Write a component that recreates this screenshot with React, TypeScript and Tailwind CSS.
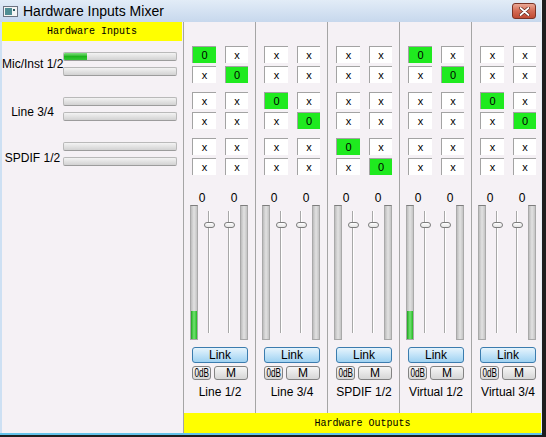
import React from 'react';

const STRIPS = [
  { name: 'Line 1/2', group: 0, level: 28 },
  { name: 'Line 3/4', group: 1, level: 0 },
  { name: 'SPDIF 1/2', group: 2, level: 0 },
  { name: 'Virtual 1/2', group: 0, level: 28 },
  { name: 'Virtual 3/4', group: 1, level: 0 },
];

const INPUTS = [
  { name: 'Mic/Inst 1/2', level: 23, nudge: '' },
  { name: 'Line 3/4', level: 0, nudge: 'mt-[6px]' },
  { name: 'SPDIF 1/2', level: 0, nudge: 'mt-[8px]' },
];

const sans = "font-['Liberation_Sans',Arial,sans-serif]";
const mono = "font-['Liberation_Mono','Courier_New',monospace]";

const Cell = ({ on, w }: { on: boolean; w: string }) => (
  <div
    className={`${w} h-[17px] flex items-center justify-center border-t border-l border-[#a3a3a3] text-[11px] leading-none text-black ${
      on ? 'bg-[#1fea1f]' : 'bg-white'
    }`}
  >
    {on ? '0' : 'x'}
  </div>
);

const HBar = ({ level }: { level: number }) => (
  <div className="h-[9px] w-full rounded-[2px] border border-[#b9b9b9] border-b-[#9c9c9c] bg-linear-to-b from-[#f3f3f3] to-[#d2d2d2] flex overflow-hidden">
    {level > 0 && (
      <div className="h-full bg-linear-to-b from-[#7be07b] via-[#1cb51c] to-[#34c734]" style={{ width: level }} />
    )}
  </div>
);

const VMeter = ({ level }: { level: number }) => (
  <div className="w-[8px] h-full flex flex-col justify-end border border-[#a9a9a9] border-t-[#7d7d7d] bg-linear-to-r from-[#bdbdbd] via-[#e2e2e2] to-[#c4c4c4]">
    {level > 0 && (
      <div className="w-full bg-linear-to-r from-[#1aa51a] via-[#6fe56f] to-[#1fb71f]" style={{ height: level }} />
    )}
  </div>
);

const Fader = ({ ml }: { ml: string }) => (
  <div className={`${ml} w-[12px] h-full relative flex justify-center`}>
    <div className="mt-[6px] mb-[7px] w-[2px] border-l border-[#a8a8a8] bg-white" />
    <div className="absolute left-[1px] top-[17px] w-[11px] h-[6px] rounded-full border border-[#7c7c7c] bg-linear-to-b from-white to-[#e4e4e4]" />
  </div>
);

const smallBtn =
  'h-[14px] rounded-[3px] border border-[#838383] bg-linear-to-b from-[#f6f6f6] to-[#d6d6d6] text-[12px] leading-none text-black flex items-center justify-center';

const Strip = ({ s, last }: { s: (typeof STRIPS)[number]; last: boolean }) => (
  <div className={`${last ? 'flex-1 min-w-0' : 'w-[72px]'} shrink-0 h-full border-l border-[#a5a5a5] flex flex-col pt-[24px]`}>
    <div className="flex flex-col gap-[9px]">
      {[0, 1, 2].map(g => (
        <div key={g} className="flex flex-col gap-[3px]">
          {[0, 1].map(r => (
            <div key={r} className="flex gap-[9px] pl-[8px]">
              <Cell on={g === s.group && r === 0} w="w-[24px]" />
              <Cell on={g === s.group && r === 1} w="w-[23px]" />
            </div>
          ))}
        </div>
      ))}
    </div>

    <div className="mt-[17px] h-[13px] flex text-[12px] leading-[13px] text-black pl-[12px]">
      <span className="w-[12px] text-center">0</span>
      <span className="w-[12px] text-center ml-[20px]">0</span>
    </div>

    <div className="h-[135px] flex pl-[6px]">
      <VMeter level={s.level} />
      <Fader ml="ml-[5px]" />
      <Fader ml="ml-[8px]" />
      <div className="ml-[5px] h-full">
        <VMeter level={0} />
      </div>
    </div>

    <button className="mt-[7px] ml-[8px] w-[56px] h-[16px] rounded-[3px] border border-[#3b7cae] bg-linear-to-b from-[#e6f4fc] via-[#c2e3f8] to-[#9fd2f1] text-[12px] leading-none text-black flex items-center justify-center">
      Link
    </button>

    <div className="mt-[3px] ml-[8px] flex gap-[3px]">
      <button className={`w-[19px] ${smallBtn}`}>
        <span className="inline-block scale-x-[0.68] whitespace-nowrap">0dB</span>
      </button>
      <button className={`w-[34px] ${smallBtn}`}>M</button>
    </div>

    <div className="mt-[5px] w-[72px] text-center text-[12px] leading-[14px] text-black whitespace-nowrap">{s.name}</div>
  </div>
);

export default function App() {
  return (
    <div className={`w-[546px] h-[437px] bg-[#1e1e1e] overflow-hidden ${sans}`}>
      <div className="w-[542px] h-[435px] flex flex-col bg-[#f5f1f5] border-b-2 border-[#64c3ea]">
        {/* title bar */}
        <div className="h-[22px] shrink-0 flex items-center pl-[3px] pr-[5px] bg-linear-to-b from-[#e2ecf7] to-[#c7d8ed] border-r border-[#e8f0f8]">
          <svg width="15" height="11" viewBox="0 0 15 11" className="shrink-0">
            <rect x="0.5" y="0.5" width="14" height="10" fill="#f4f4f4" stroke="#6b7280" />
            <rect x="2" y="2" width="7" height="7" fill="#4f8d93" />
            <rect x="10" y="3" width="2" height="2" fill="#2b5a60" />
          </svg>
          <span className="ml-[5px] text-[14px] leading-none text-black">Hardware Inputs Mixer</span>
          <div className="ml-auto w-[24px] h-[16px] rounded-[3px] border border-[#7a3326] bg-linear-to-b from-[#e9a896] via-[#d46a54] to-[#c04a33] flex items-center justify-center">
            <svg width="11" height="9" viewBox="0 0 11 9">
              <path d="M1.5 1 L9.5 8 M9.5 1 L1.5 8" stroke="#5a2218" strokeWidth="3.2" strokeLinecap="round" />
              <path d="M1.5 1 L9.5 8 M9.5 1 L1.5 8" stroke="#ffffff" strokeWidth="1.8" strokeLinecap="round" />
            </svg>
          </div>
        </div>

        {/* body */}
        <div className="flex-1 min-h-0 flex border-l-2 border-[#cde0f3] border-r border-r-[#e6eff8]">
          {/* hardware inputs */}
          <div className="w-[181px] shrink-0 flex flex-col">
            <div className={`w-[180px] h-[19px] bg-[#ffff00] flex items-center justify-center text-[10px] text-black ${mono}`}>
              Hardware Inputs
            </div>
            <div className="mt-[11px] flex flex-col gap-[21px]">
              {INPUTS.map(inp => (
                <div key={inp.name} className="flex items-center h-[24px]">
                  <div className={`w-[61px] shrink-0 text-center text-[12px] text-black whitespace-nowrap ${inp.nudge}`}>{inp.name}</div>
                  <div className="w-[114px] flex flex-col gap-[6px]">
                    <HBar level={inp.level} />
                    <HBar level={0} />
                  </div>
                </div>
              ))}
            </div>
          </div>

          {/* outputs */}
          <div className="flex-1 min-w-0 flex flex-col">
            <div className="flex-1 min-h-0 flex">
              {STRIPS.map((s, i) => (
                <Strip key={s.name} s={s} last={i === STRIPS.length - 1} />
              ))}
            </div>
            <div className={`h-[20px] shrink-0 bg-[#ffff00] border-l border-[#a5a5a5] flex items-center justify-center text-[10px] text-black ${mono}`}>
              Hardware Outputs
            </div>
          </div>
        </div>
      </div>
    </div>
  );
}
